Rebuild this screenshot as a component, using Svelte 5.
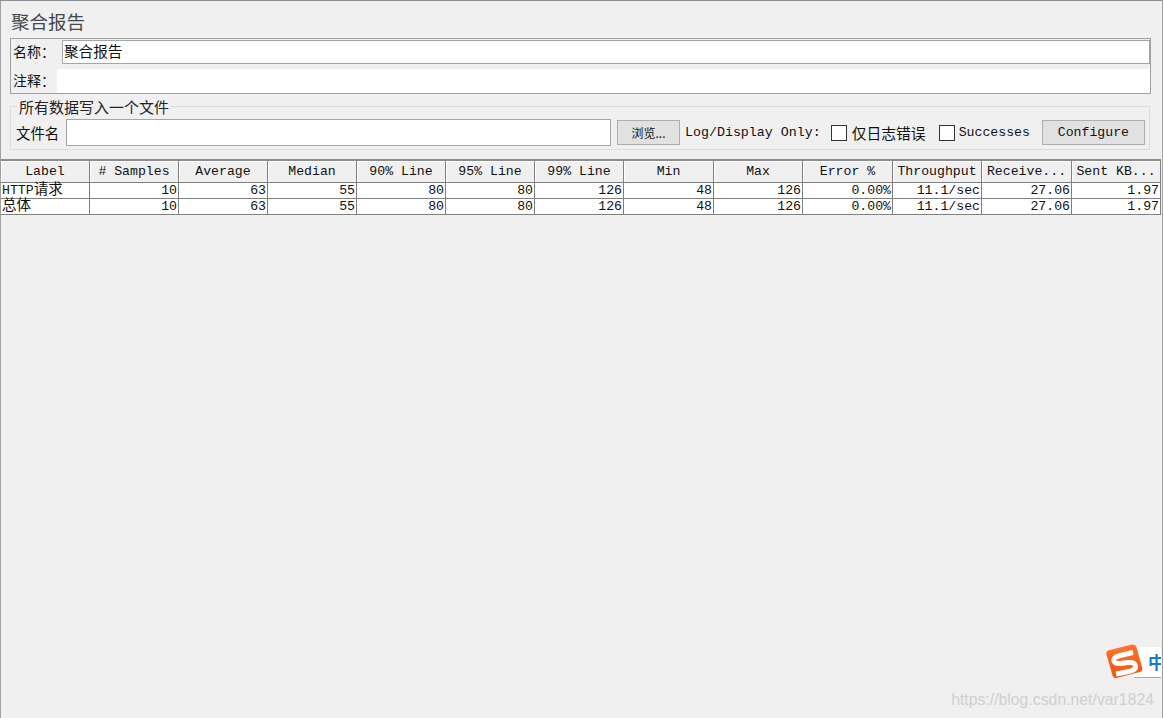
<script>
  const columns = [
    { name: 'Label', width: 89 },
    { name: '# Samples', width: 89 },
    { name: 'Average', width: 89 },
    { name: 'Median', width: 89 },
    { name: '90% Line', width: 89 },
    { name: '95% Line', width: 89 },
    { name: '99% Line', width: 89 },
    { name: 'Min', width: 90 },
    { name: 'Max', width: 89 },
    { name: 'Error %', width: 90 },
    { name: 'Throughput', width: 89 },
    { name: 'Receive...', width: 90 },
    { name: 'Sent KB...', width: 89 }
  ];

  const stats = ['10', '63', '55', '80', '80', '126', '48', '126', '0.00%', '11.1/sec', '27.06', '1.97'];
  const rows = [
    { prefix: 'HTTP', label: '请求' },
    { prefix: '', label: '总体' }
  ];
</script>

<div class="panel">
  <h1 class="title">聚合报告</h1>

  <div class="name-box">
    <div class="name-row">
      <span class="field-label">名称：</span>
      <input class="name-input" type="text" value="聚合报告" />
    </div>
    <div class="name-row">
      <span class="field-label">注释：</span>
      <div class="comment"></div>
    </div>
  </div>

  <fieldset class="file-box">
    <legend>所有数据写入一个文件</legend>
    <div class="file-row">
      <span class="file-label">文件名</span>
      <input class="file-input" type="text" />
      <button class="btn browse">浏览...</button>
      <span class="mono log-label">Log/Display Only:</span>
      <label class="check errors-check"><span class="box"></span><span class="cjk">仅日志错误</span></label>
      <label class="check success-check"><span class="box"></span><span class="mono">Successes</span></label>
      <button class="btn configure mono">Configure</button>
    </div>
  </fieldset>

  <table class="report">
    <colgroup>
      {#each columns as col}
        <col style="width: {col.width}px" />
      {/each}
    </colgroup>
    <thead>
      <tr>
        {#each columns as col}
          <th>{col.name}</th>
        {/each}
      </tr>
    </thead>
    <tbody>
      {#each rows as row}
        <tr>
          <td class="first">{row.prefix}<span class="cell-cjk">{row.label}</span></td>
          {#each stats as cell}
            <td>{cell}</td>
          {/each}
        </tr>
      {/each}
    </tbody>
  </table>
</div>

<div class="ime">
  <div class="ime-tab"><span>中</span></div>
  <svg class="ime-logo" width="38" height="36" viewBox="0 0 38 36">
    <defs>
      <linearGradient id="sogou" x1="0" y1="0" x2="0" y2="1">
        <stop offset="0" stop-color="#ff7430" />
        <stop offset="1" stop-color="#f0540f" />
      </linearGradient>
    </defs>
    <path d="M2 6.500 L26 0.600 Q29.500 0 30.500 3 L36.300 24 Q37 27 34 28 L10.500 34 Q7.500 34.500 6.500 31.500 L0.300 10 Q0 7.500 2 6.500 Z" fill="url(#sogou)" />
    <path d="M27 8.500 L14 11.500 Q7 13.500 8 17 Q9 20 14 19.500 L22 18.500 Q29 18 29.500 22 Q30 26 23 27.500 L10 30" fill="none" stroke="#fff" stroke-width="5" />
  </svg>
</div>

<div class="watermark">https://blog.csdn.net/var1824</div>

<style>
  :global(body) {
    margin: 0;
    background: #f0f0f0;
  }

  .panel {
    box-sizing: border-box;
    height: 718px;
    background: #f0f0f0;
    border-top: 1px solid #8a8d92;
    border-left: 1px solid #a0a0a0;
    border-right: 1px solid #a0a0a0;
    font-family: "Noto Sans CJK SC", "Liberation Mono", monospace;
    color: #111;
    overflow: hidden;
  }

  .title {
    margin: 0;
    padding: 7px 0 0 10px;
    height: 30px;
    box-sizing: content-box;
    font-size: 18.500px;
    line-height: 27px;
    font-weight: 400;
    color: #44484c;
  }

  .name-box {
    box-sizing: border-box;
    display: flex;
    flex-direction: column;
    gap: 5px;
    margin: 0 11px 0 9px;
    height: 56px;
    border: 1px solid #a0a0a0;
    padding: 1px 0 0 0;
  }

  .name-row {
    display: flex;
    align-items: center;
    height: 24px;
  }

  .field-label {
    width: 44px;
    padding: 0 0 3px 2px;
    font-size: 14px;
    flex: none;
  }

  .name-input {
    flex: 1;
    box-sizing: border-box;
    height: 24px;
    margin: 0 0 0 5px;
    padding: 0 1px 3px;
    border: 1px solid #a5a5a8;
    background: #fff;
    font: 14.600px "Noto Sans CJK SC", sans-serif;
    color: #111;
    outline: none;
    min-width: 0;
  }

  .comment {
    flex: 1;
    height: 24px;
    background: #fff;
  }

  .file-box {
    margin: 4px 12px 0 9px;
    padding: 0 4px 0 5px;
    height: 52px;
    box-sizing: border-box;
    border: 1px solid #dcdcdc;
    min-width: 0;
  }

  legend {
    margin-left: 1px;
    padding: 0 2px;
    font-size: 15px;
    line-height: 17px;
    color: #222;
  }

  .file-row {
    display: flex;
    align-items: center;
    height: 29px;
    margin-top: 3px;
    white-space: nowrap;
  }

  .file-label {
    font-size: 14.400px;
    width: 50px;
    flex: none;
  }

  .file-input {
    box-sizing: border-box;
    width: 545px;
    height: 27px;
    padding: 0;
    border: 1px solid #a5a5a8;
    background: #fff;
    outline: none;
    flex: none;
  }

  .btn {
    box-sizing: border-box;
    height: 25px;
    padding: 0;
    border: 1px solid #adadad;
    background: #e1e1e1;
    color: #111;
    flex: none;
  }

  .browse {
    width: 63px;
    margin-left: 6px;
    font: 12px "Noto Sans CJK SC", sans-serif;
  }

  .configure {
    width: 103px;
    margin-left: 12px;
  }

  .mono {
    font-family: "Liberation Mono", monospace;
    font-size: 13.200px;
  }

  .log-label {
    margin-left: 5px;
    font-size: 13.300px;
    flex: none;
  }

  .check {
    display: flex;
    align-items: center;
    gap: 5px;
    margin-left: 10px;
    flex: none;
  }

  .errors-check {
    margin-right: 3px;
  }

  .success-check {
    gap: 4px;
  }

  .cjk {
    font-size: 14.800px;
  }

  .box {
    box-sizing: border-box;
    width: 16px;
    height: 16px;
    background: #fff;
    border: 1px solid #333;
  }

  .report {
    margin-top: 9px;
    margin-left: -1px;
    width: 1161px;
    table-layout: fixed;
    border-collapse: collapse;
    font-family: "Liberation Mono", "Noto Sans CJK SC", monospace;
    font-size: 13.200px;
  }

  th {
    box-sizing: border-box;
    height: 22px;
    padding: 0;
    font-weight: 400;
    text-align: center;
    background: #f0f0f0;
    border: 1px solid #808080;
    border-top: 2px solid #8c8c8c;
    box-shadow: inset 1px 1px 0 #fff;
    white-space: nowrap;
    overflow: hidden;
  }

  td {
    box-sizing: border-box;
    height: 16px;
    padding: 0 1px 0 0;
    line-height: 14px;
    text-align: right;
    vertical-align: bottom;
    background: #fff;
    border: 1px solid #808080;
    white-space: nowrap;
    overflow: hidden;
  }

  td.first {
    text-align: left;
    padding-left: 1px;
    overflow: visible;
  }

  .cell-cjk {
    font-family: "Noto Sans CJK SC", sans-serif;
    font-size: 14.500px;
    line-height: 0;
  }

  .ime {
    position: absolute;
    left: 1106px;
    top: 644px;
    width: 57px;
    height: 36px;
  }

  .ime-tab {
    position: absolute;
    left: 28px;
    top: 3px;
    width: 27px;
    height: 30px;
    background: #fff;
    border-bottom: 1px solid #a9a9a9;
    overflow: hidden;
  }

  .ime-tab span {
    position: absolute;
    left: 14px;
    top: 3px;
    font: 700 17px/24px "Noto Sans CJK SC", sans-serif;
    color: #1e78c8;
  }

  .ime-logo {
    position: absolute;
    left: 0;
    top: 0;
  }

  .watermark {
    position: absolute;
    right: 9px;
    top: 691px;
    font: 15.800px/18px "Liberation Sans", sans-serif;
    color: #cfcfcf;
  }
</style>
